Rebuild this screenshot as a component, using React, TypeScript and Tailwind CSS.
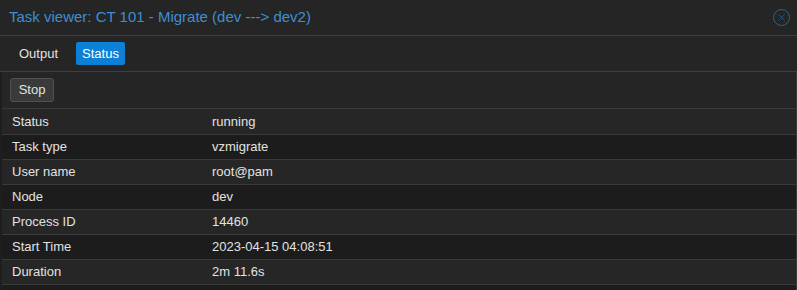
import { X } from 'lucide-react';

const rows: [string, string][] = [
  ['Status', 'running'],
  ['Task type', 'vzmigrate'],
  ['User name', 'root@pam'],
  ['Node', 'dev'],
  ['Process ID', '14460'],
  ['Start Time', '2023-04-15 04:08:51'],
  ['Duration', '2m 11.6s'],
];

export default function App() {
  return (
    <div className="w-[797px] h-[290px] overflow-hidden bg-[#252525] font-['Liberation_Sans',Arial,sans-serif] text-[13px] text-[#e2e2e2]">
      {/* title bar */}
      <div className="h-[36px] flex items-center justify-between pl-[9px] pr-[7px] border-b border-[#3f3f3f]">
        <span className="text-[15px] text-[#3c8fd4]">Task viewer: CT 101 - Migrate (dev ---&gt; dev2)</span>
        <button className="h-[17px] w-[17px] rounded-full border border-[#2c6398] flex items-center justify-center text-[#2c6398]">
          <X className="h-[11px] w-[11px]" strokeWidth={1.5} />
        </button>
      </div>

      {/* tabs */}
      <div className="h-[36px] flex items-center gap-[8px] pl-[9px] border-b border-[#3f3f3f]">
        <span className="px-[10px] py-[4px]">Output</span>
        <span className="px-[6px] py-[4px] bg-[#0c7fd6] text-white rounded-[2px] leading-[15px]">Status</span>
      </div>

      {/* toolbar + grid */}
      <div className="border-r border-l-2 border-[#3a3a3a] border-l-[#1e1e1e]">
        <div className="h-[37px] flex items-center pl-[8px] border-b border-[#3a3a3a]">
          <button className="h-[24px] w-[44px] bg-[#3a3a3a] border border-[#505050] rounded-[3px] text-[13px]">Stop</button>
        </div>
        <div className="pt-px bg-[#262626]">
          {rows.map(([k, v], i) => (
            <div
              key={k}
              className={`h-[25px] flex items-center border-b border-[#3a3a3a] ${i % 2 === 0 ? 'bg-[#262626]' : 'bg-[#1c1c1c]'}`}
            >
              <span className="w-[210px] pl-[10px]">{k}</span>
              <span>{v}</span>
            </div>
          ))}
          <div className="h-[10px] bg-[#1c1c1c]" />
        </div>
      </div>
    </div>
  );
}
